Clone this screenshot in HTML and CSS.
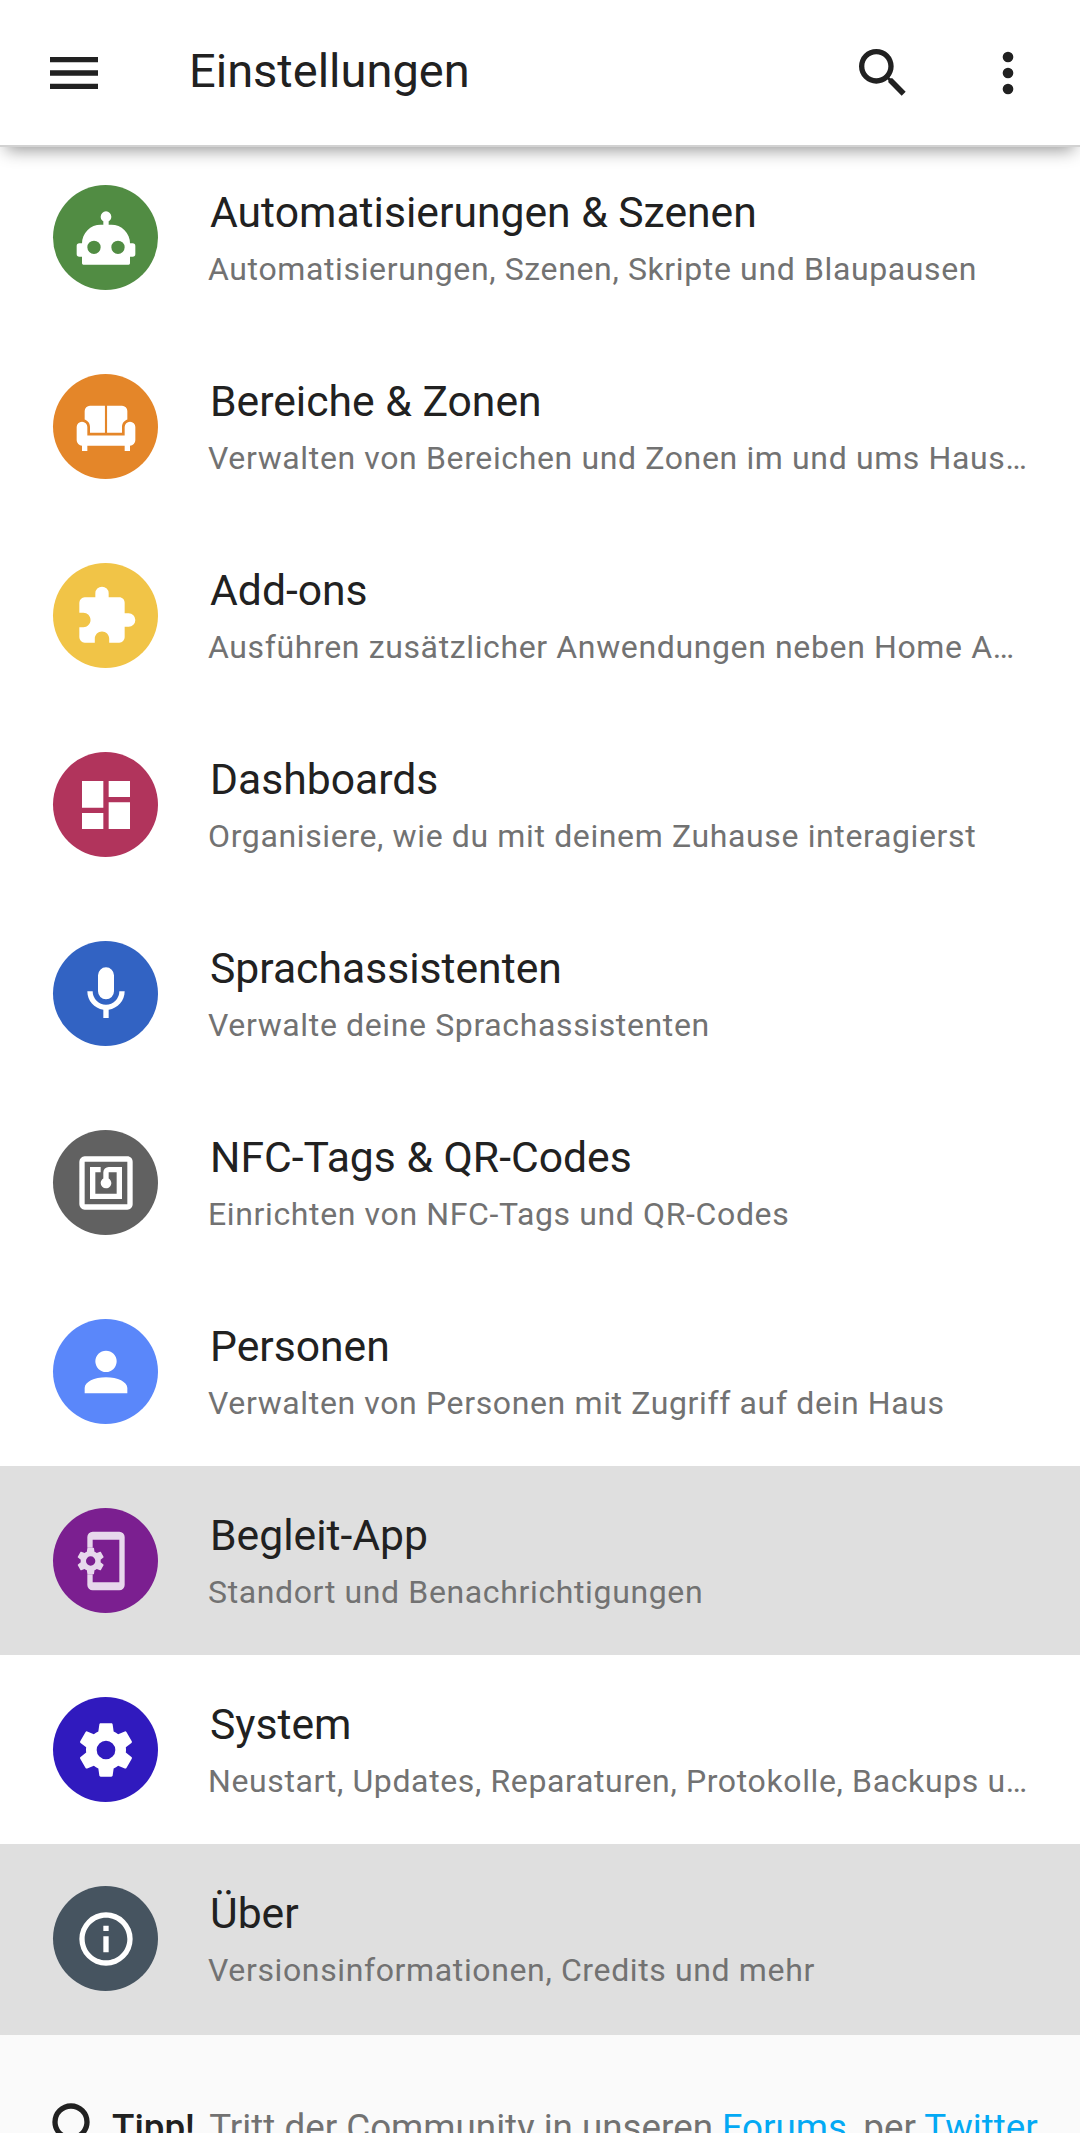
FILE: index.html
```html
<!DOCTYPE html>
<html lang="de">
<head>
<meta charset="utf-8">
<title>Einstellungen</title>
<link rel="stylesheet" href="styles.css">
</head>
<body>
<header class="topbar">
  <svg class="bar-icon menu" viewBox="0 0 24 24"><path d="M3,6H21V8H3V6M3,11H21V13H3V11M3,16H21V18H3V16Z"/></svg>
  <h1 class="page-title">Einstellungen</h1>
  <svg class="bar-icon search" viewBox="0 0 24 24"><path d="M9.5,3A6.5,6.5 0 0,1 16,9.5C16,11.11 15.41,12.59 14.44,13.73L14.71,14H15.5L20.5,19L19,20.5L14,15.5V14.71L13.73,14.44C12.59,15.41 11.11,16 9.5,16A6.5,6.5 0 0,1 3,9.5A6.5,6.5 0 0,1 9.5,3M9.5,5C7,5 5,7 5,9.5C5,12 7,14 9.5,14C12,14 14,12 14,9.5C14,7 12,5 9.5,5Z"/></svg>
  <svg class="bar-icon more" viewBox="0 0 24 24"><path d="M12,16A2,2 0 0,1 14,18A2,2 0 0,1 12,20A2,2 0 0,1 10,18A2,2 0 0,1 12,16M12,10A2,2 0 0,1 14,12A2,2 0 0,1 12,14A2,2 0 0,1 10,12A2,2 0 0,1 12,10M12,4A2,2 0 0,1 14,6A2,2 0 0,1 12,8A2,2 0 0,1 10,6A2,2 0 0,1 12,4Z"/></svg>
</header>
<main class="list">
  <a class="row">
    <span class="badge c-green"><svg viewBox="0 0 24 24"><path d="M12,2A2,2 0 0,1 14,4C14,4.74 13.6,5.39 13,5.73V7H14A7,7 0 0,1 21,14H22A1,1 0 0,1 23,15V18A1,1 0 0,1 22,19H21V21.5A.5,.5 0 0,1 20.5,22H3.5A.5,.5 0 0,1 3,21.5V19H2A1,1 0 0,1 1,18V15A1,1 0 0,1 2,14H3A7,7 0 0,1 10,7H11V5.73C10.4,5.39 10,4.74 10,4A2,2 0 0,1 12,2M7.5,13A2.5,2.5 0 0,0 5,15.5A2.5,2.5 0 0,0 7.5,18A2.5,2.5 0 0,0 10,15.5A2.5,2.5 0 0,0 7.5,13M16.5,13A2.5,2.5 0 0,0 14,15.5A2.5,2.5 0 0,0 16.5,18A2.5,2.5 0 0,0 19,15.5A2.5,2.5 0 0,0 16.5,13Z"/></svg></span>
    <span class="text"><span class="name">Automatisierungen &amp; Szenen</span><span class="desc">Automatisierungen, Szenen, Skripte und Blaupausen</span></span>
  </a>
  <a class="row">
    <span class="badge c-orange"><svg viewBox="0 0 24 24"><path d="M6,4H11.6V14.2H6V12C6,10.7 5.2,9.6 4,9.2V6A2,2 0 0,1 6,4ZM12.4,4H18A2,2 0 0,1 20,6V9.2C18.8,9.6 18,10.7 18,12V14.2H12.4ZM3,10A2,2 0 0,1 5,12V15.2H19V12A2,2 0 0,1 23,12V17A2,2 0 0,1 21,19V21H19V19H5V21H3V19A2,2 0 0,1 1,17V12A2,2 0 0,1 3,10Z"/></svg></span>
    <span class="text"><span class="name">Bereiche &amp; Zonen</span><span class="desc">Verwalten von Bereichen und Zonen im und ums Haus herum</span></span>
  </a>
  <a class="row">
    <span class="badge c-yellow"><svg viewBox="0 0 24 24"><path d="M20.5,11H19V7C19,5.89 18.1,5 17,5H13V3.5A2.5,2.5 0 0,0 10.5,1A2.5,2.5 0 0,0 8,3.5V5H4A2,2 0 0,0 2,7V10.8H3.5C5,10.8 6.2,12 6.2,13.5C6.2,15 5,16.2 3.5,16.2H2V20A2,2 0 0,0 4,22H7.8V20.5C7.8,19 9,17.8 10.5,17.8C12,17.8 13.2,19 13.2,20.5V22H17A2,2 0 0,0 19,20V16H20.5A2.5,2.5 0 0,0 23,13.5A2.5,2.5 0 0,0 20.5,11Z"/></svg></span>
    <span class="text"><span class="name">Add-ons</span><span class="desc">Ausführen zusätzlicher Anwendungen neben Home Assistant</span></span>
  </a>
  <a class="row">
    <span class="badge c-crimson"><svg viewBox="0 0 24 24"><path d="M13,3V9H21V3M13,21H21V11H13M3,21H11V15H3M3,13H11V3H3V13Z"/></svg></span>
    <span class="text"><span class="name">Dashboards</span><span class="desc">Organisiere, wie du mit deinem Zuhause interagierst</span></span>
  </a>
  <a class="row">
    <span class="badge c-blue"><svg viewBox="0 0 24 24"><path d="M12,2A3,3 0 0,1 15,5V11A3,3 0 0,1 12,14A3,3 0 0,1 9,11V5A3,3 0 0,1 12,2M19,11C19,14.53 16.39,17.44 13,17.93V21H11V17.93C7.61,17.44 5,14.53 5,11H7A5,5 0 0,0 12,16A5,5 0 0,0 17,11H19Z"/></svg></span>
    <span class="text"><span class="name">Sprachassistenten</span><span class="desc">Verwalte deine Sprachassistenten</span></span>
  </a>
  <a class="row">
    <span class="badge c-grey"><svg viewBox="0 0 24 24"><path d="M18,6H13A2,2 0 0,0 11,8V10.28C10.41,10.62 10,11.26 10,12A2,2 0 0,0 12,14C13.11,14 14,13.1 14,12C14,11.26 13.6,10.62 13,10.28V8H16V16H8V8H10V6H8L6,6V18H18M20,20H4V4H20M20,2H4A2,2 0 0,0 2,4V20A2,2 0 0,0 4,22H20C21.11,22 22,21.1 22,20V4C22,2.89 21.11,2 20,2Z"/></svg></span>
    <span class="text"><span class="name">NFC-Tags &amp; QR-Codes</span><span class="desc">Einrichten von NFC-Tags und QR-Codes</span></span>
  </a>
  <a class="row">
    <span class="badge c-sky"><svg viewBox="0 0 24 24"><path d="M12,4A4,4 0 0,1 16,8A4,4 0 0,1 12,12A4,4 0 0,1 8,8A4,4 0 0,1 12,4M12,14C16.42,14 20,15.79 20,18V20H4V18C4,15.79 7.58,14 12,14Z"/></svg></span>
    <span class="text"><span class="name">Personen</span><span class="desc">Verwalten von Personen mit Zugriff auf dein Haus</span></span>
  </a>
  <a class="row active">
    <span class="badge c-purple"><svg class="soft" viewBox="0 0 24 24"><path d="M7,1A2,2 0 0,0 5,3V7H7V4H17V20H7V17H5V21A2,2 0 0,0 7,23H17A2,2 0 0,0 19,21V3A2,2 0 0,0 17,1Z"/><g transform="translate(0.25,6) scale(0.5)"><path d="M12,15.5A3.5,3.5 0 0,1 8.5,12A3.5,3.5 0 0,1 12,8.5A3.5,3.5 0 0,1 15.5,12A3.5,3.5 0 0,1 12,15.5M19.43,12.97C19.47,12.65 19.5,12.33 19.5,12C19.5,11.67 19.47,11.34 19.43,11L21.54,9.37C21.73,9.22 21.78,8.95 21.66,8.73L19.66,5.27C19.54,5.05 19.27,4.96 19.05,5.05L16.56,6.05C16.04,5.66 15.5,5.32 14.87,5.07L14.5,2.42C14.46,2.18 14.25,2 14,2H10C9.75,2 9.54,2.18 9.5,2.42L9.13,5.07C8.5,5.32 7.96,5.66 7.44,6.05L4.95,5.05C4.73,4.96 4.46,5.05 4.34,5.27L2.34,8.73C2.21,8.95 2.27,9.22 2.46,9.37L4.57,11C4.53,11.34 4.5,11.67 4.5,12C4.5,12.33 4.53,12.65 4.57,12.97L2.46,14.63C2.27,14.78 2.21,15.05 2.34,15.27L4.34,18.73C4.46,18.95 4.73,19.03 4.95,18.95L7.44,17.94C7.96,18.34 8.5,18.68 9.13,18.93L9.5,21.58C9.54,21.82 9.75,22 10,22H14C14.25,22 14.46,21.82 14.5,21.58L14.87,18.93C15.5,18.67 16.04,18.34 16.56,17.94L19.05,18.95C19.27,19.03 19.54,18.95 19.66,18.73L21.66,15.27C21.78,15.05 21.73,14.78 21.54,14.63L19.43,12.97Z"/></g></svg></span>
    <span class="text"><span class="name">Begleit-App</span><span class="desc">Standort und Benachrichtigungen</span></span>
  </a>
  <a class="row">
    <span class="badge c-indigo"><svg viewBox="0 0 24 24"><path d="M12,15.5A3.5,3.5 0 0,1 8.5,12A3.5,3.5 0 0,1 12,8.5A3.5,3.5 0 0,1 15.5,12A3.5,3.5 0 0,1 12,15.5M19.43,12.97C19.47,12.65 19.5,12.33 19.5,12C19.5,11.67 19.47,11.34 19.43,11L21.54,9.37C21.73,9.22 21.78,8.95 21.66,8.73L19.66,5.27C19.54,5.05 19.27,4.96 19.05,5.05L16.56,6.05C16.04,5.66 15.5,5.32 14.87,5.07L14.5,2.42C14.46,2.18 14.25,2 14,2H10C9.75,2 9.54,2.18 9.5,2.42L9.13,5.07C8.5,5.32 7.96,5.66 7.44,6.05L4.95,5.05C4.73,4.96 4.46,5.05 4.34,5.27L2.34,8.73C2.21,8.95 2.27,9.22 2.46,9.37L4.57,11C4.53,11.34 4.5,11.67 4.5,12C4.5,12.33 4.53,12.65 4.57,12.97L2.46,14.63C2.27,14.78 2.21,15.05 2.34,15.27L4.34,18.73C4.46,18.95 4.73,19.03 4.95,18.95L7.44,17.94C7.96,18.34 8.5,18.68 9.13,18.93L9.5,21.58C9.54,21.82 9.75,22 10,22H14C14.25,22 14.46,21.82 14.5,21.58L14.87,18.93C15.5,18.67 16.04,18.34 16.56,17.94L19.05,18.95C19.27,19.03 19.54,18.95 19.66,18.73L21.66,15.27C21.78,15.05 21.73,14.78 21.54,14.63L19.43,12.97Z"/></svg></span>
    <span class="text"><span class="name">System</span><span class="desc">Neustart, Updates, Reparaturen, Protokolle, Backups und mehr</span></span>
  </a>
  <a class="row active">
    <span class="badge c-slate"><svg viewBox="0 0 24 24"><path d="M11,9H13V7H11M12,20C7.59,20 4,16.41 4,12C4,7.59 7.59,4 12,4C16.41,4 20,7.59 20,12C20,16.41 16.41,20 12,20M12,2A10,10 0 0,0 2,12A10,10 0 0,0 12,22A10,10 0 0,0 22,12A10,10 0 0,0 12,2M11,17H13V11H11V17Z"/></svg></span>
    <span class="text"><span class="name">Über</span><span class="desc">Versionsinformationen, Credits und mehr</span></span>
  </a>
</main>
<footer class="tip">
  <svg class="tip-icon" viewBox="0 0 24 24"><path d="M12,2A7,7 0 0,1 19,9C19,11.38 17.81,13.47 16,14.74V17A1,1 0 0,1 15,18H9A1,1 0 0,1 8,17V14.74C6.19,13.47 5,11.38 5,9A7,7 0 0,1 12,2M9,21V20H15V21A1,1 0 0,1 14,22H10A1,1 0 0,1 9,21M12,4A5,5 0 0,0 7,9C7,11.05 8.23,12.81 10,13.58V16H14V13.58C15.77,12.81 17,11.05 17,9A5,5 0 0,0 12,4Z"/></svg>
  <p class="tip-text"><b class="tip-label">Tipp!</b> Tritt der Community in unseren <a class="link">Forums</a>, per <a class="link">Twitter</a></p>
</footer>
</body>
</html>
```
FILE: styles.css
```css
* { box-sizing: border-box; }
html, body { margin: 0; padding: 0; height: 2133px; overflow: hidden; background: #fafafa; }
body { font-family: Roboto, "Noto Sans", sans-serif; color: #212121; }

.topbar {
  position: relative;
  z-index: 2;
  height: 145px;
  background: #fff;
  display: flex;
  align-items: center;
  padding-left: 42px;
  box-shadow: 0 2px 0 #d2d2d2, 0 11px 16px -6px rgba(0,0,0,.42);
}
.bar-icon { width: 64px; height: 64px; fill: #212121; flex: none; }
.page-title { margin: 0 0 4px 83px; font-size: 47px; font-weight: 400; flex: 1; }
.search { margin-right: 61px; }
.more { margin-right: 40px; }

.list { margin-top: -2px; background: #fff; }
.row {
  height: 189px;
  display: flex;
  align-items: center;
  padding-left: 53px;
}
.row:last-child { height: 190.7px; padding-bottom: 1.7px; }
.row.active { background: #dfdfdf; }
.badge {
  width: 105px;
  height: 105px;
  border-radius: 50%;
  flex: none;
  display: flex;
  align-items: center;
  justify-content: center;
}
.badge svg { width: 64px; height: 64px; fill: #fff; }
.badge svg.soft { fill: #e7d8ec; }
.c-green { background: #518c43; }
.c-orange { background: #e48629; }
.c-yellow { background: #f1c447; }
.c-crimson { background: #b1345c; }
.c-blue { background: #3263c3; }
.c-grey { background: #616161; }
.c-sky { background: #5a87fa; }
.c-purple { background: #7b1f90; }
.c-indigo { background: #301abe; }
.c-slate { background: #465460; }

.text { margin-left: 50px; padding-top: 6px; width: 820px; display: flex; flex-direction: column; gap: 1px; min-width: 0; }
.name { font-size: 42.67px; line-height: 56px; margin-left: 2px; }
.desc {
  font-size: 32px;
  line-height: 56px;
  color: #727272;
  letter-spacing: .63px;
  white-space: nowrap;
  overflow: hidden;
  text-overflow: ellipsis;
}

.tip { display: flex; align-items: flex-start; padding: 63px 0 0 39px; }
.tip-icon { width: 64px; height: 64px; fill: #212121; flex: none; }
.tip-text { margin: -2px 0 0 9px; font-size: 36.78px; line-height: 64px; color: #727272; white-space: nowrap; }
.tip-label { color: #212121; font-weight: 500; margin-right: 6px; }
.link { color: #03a9f4; }
```
